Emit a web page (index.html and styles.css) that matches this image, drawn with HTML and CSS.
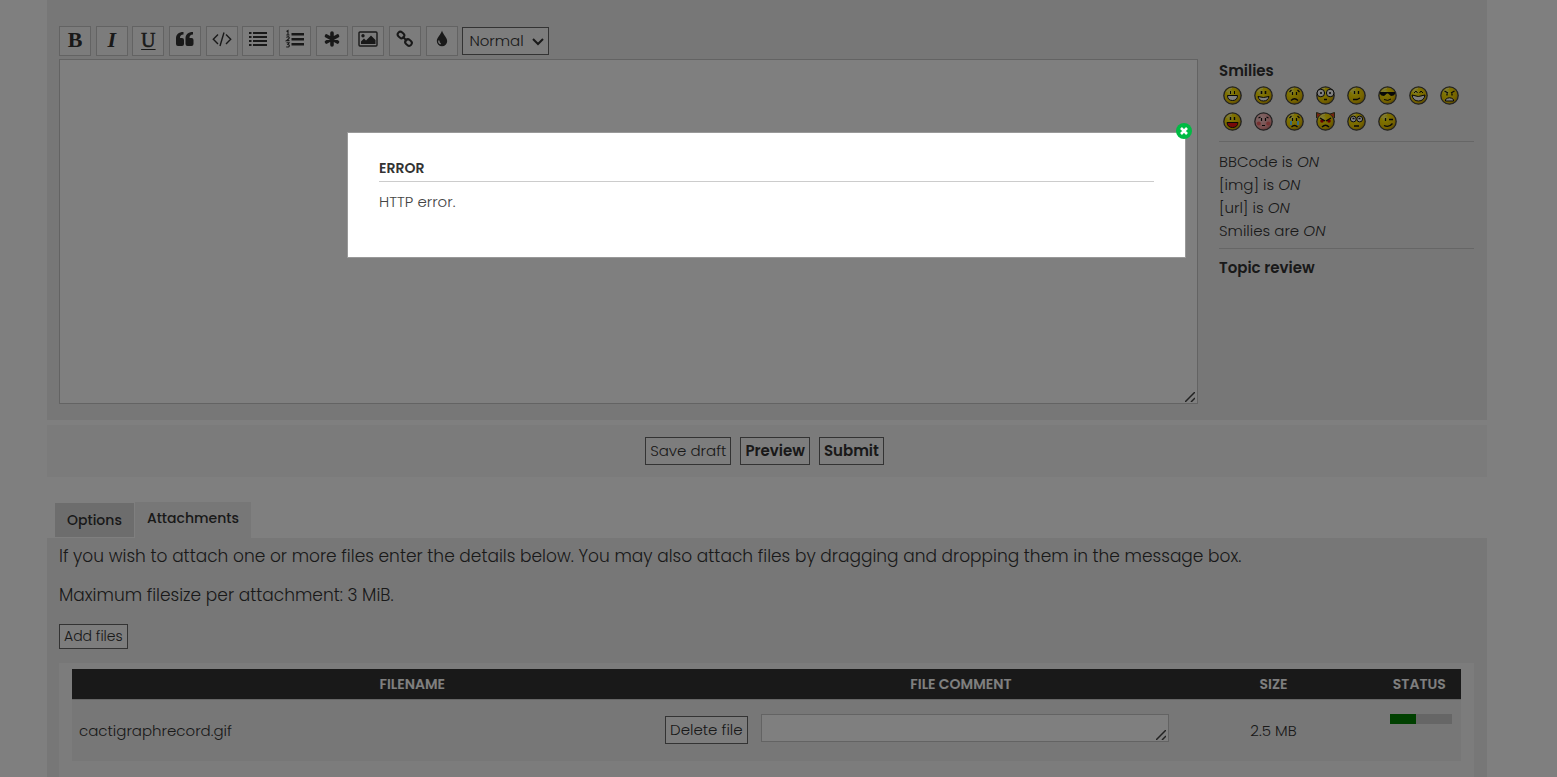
FILE: index.html
```html
<!DOCTYPE html>
<html lang="en">
<head>
<meta charset="utf-8">
<title>Post a new topic</title>
<link rel="stylesheet" href="styles.css">
</head>
<body>
<svg class="defs" aria-hidden="true">
  <defs>
    <radialGradient id="yellow" cx="0.35" cy="0.3" r="0.8"><stop offset="0" stop-color="#ffff7a"/><stop offset="0.25" stop-color="#ffe600"/><stop offset="0.7" stop-color="#eac400"/><stop offset="1" stop-color="#a88400"/></radialGradient>
    <radialGradient id="pink" cx="0.35" cy="0.3" r="0.8"><stop offset="0" stop-color="#ffd0d0"/><stop offset="0.7" stop-color="#f09c9c"/><stop offset="1" stop-color="#c06868"/></radialGradient>
    <symbol id="face" viewBox="0 0 19 19"><circle cx="9.500" cy="9.500" r="8.700" fill="url(#yellow)" stroke="#444" stroke-width="1.300"/><path d="M3.500 6Q5.500 2.500 9 2.200" stroke="#fff" stroke-opacity=".55" fill="none"/></symbol>
  </defs>
</svg>
<main class="page">
  <section class="panel post">
    <div class="editor">
      <div class="toolbar">
        <button class="tool serif" type="button" aria-label="Bold"><b>B</b></button>
        <button class="tool serif" type="button" aria-label="Italic"><i>I</i></button>
        <button class="tool serif" type="button" aria-label="Underline"><u>U</u></button>
        <button class="tool" type="button" aria-label="Quote"><svg viewBox="0 0 20 20"><path d="M8.500 3v2.400C6 5.400 5 6.800 5 9h2a2 2 0 0 1 2 2v4a2 2 0 0 1-2 2H3a2 2 0 0 1-2-2V9.500C1 5.500 3.500 3 8.500 3zM18 3v2.400C15.500 5.400 14.500 6.800 14.500 9h2a2 2 0 0 1 2 2v4a2 2 0 0 1-2 2h-4a2 2 0 0 1-2-2V9.500C10.500 5.500 13 3 18 3z"/></svg></button>
        <button class="tool" type="button" aria-label="Code"><svg viewBox="0 0 20 20"><path d="M6 5.500 1.300 10.200 6 15M14 5.500l4.700 4.700L14 15M12 3.500 8 17" fill="none" stroke="currentColor" stroke-width="1.400"/></svg></button>
        <button class="tool" type="button" aria-label="List"><svg viewBox="0 0 20 20"><path d="M1 3h2.500v2H1zm4 0h14v2H5zM1 7h2.500v2H1zm4 0h14v2H5zM1 11h2.500v2H1zm4 0h14v2H5zM1 15h2.500v2H1zm4 0h14v2H5z"/></svg></button>
        <button class="tool" type="button" aria-label="Ordered list"><svg viewBox="0 0 20 20"><path d="M6.500 4H19v2.400H6.500zm0 5H19v2.400H6.500zm0 5H19v2.400H6.500z"/><path d="M1.500 2.500 3 1.500V6M1.300 6h3.200M1.500 8.500q1.500-1.500 2.500-.3T1.500 11.600h3M1.500 13.800h2.600l-1.200 1.600q1.600 0 1.400 1.500t-3 1" fill="none" stroke="currentColor" stroke-width="1.100"/></svg></button>
        <button class="tool" type="button" aria-label="List item"><svg viewBox="0 0 20 20"><path d="M10 4v12M4.500 7l11 6M4.500 13l11-6" stroke="currentColor" stroke-width="3.600" stroke-linecap="round"/></svg></button>
        <button class="tool" type="button" aria-label="Image"><svg viewBox="0 0 20 20"><rect x="1" y="3" width="18" height="14" rx="1" fill="none" stroke="currentColor" stroke-width="1.400"/><circle cx="5" cy="6.800" r="1.700"/><path d="M3 15v-2.500l3-3 2 2 5-5 4.500 4.500v4z"/></svg></button>
        <button class="tool" type="button" aria-label="Link"><svg viewBox="0 0 20 20"><g fill="none" stroke="currentColor" stroke-width="2"><rect x="-3.500" y="-2.700" width="7" height="5.400" rx="2.700" transform="translate(6 6) rotate(42)"/><rect x="-3.500" y="-2.700" width="7" height="5.400" rx="2.700" transform="translate(13.500 13.500) rotate(42)"/><path d="m7.500 7.500 4.500 4.500"/></g></svg></button>
        <button class="tool" type="button" aria-label="Font colour"><svg viewBox="0 0 20 20"><path d="M10 1.500C9 5.500 4.800 8.500 4.800 12a5.200 5.200 0 0 0 10.400 0C15.200 8.500 11 5.500 10 1.500z"/><path d="M7 11.500q-.8 2.500 1.700 3.300" fill="none" stroke="#f5f5f5" stroke-width="1.300"/></svg></button>
        <span class="picker"><select class="size" aria-label="Font size"><option>Normal</option></select><svg viewBox="0 0 12 8"><path d="m1 1 5 5 5-5" fill="none" stroke="currentColor" stroke-width="2"/></svg></span>
      </div>
      <span class="grow">
        <textarea class="message" aria-label="Message"></textarea>
        <svg class="grip" viewBox="0 0 10 10"><path d="M0 10 10 0M6 10l4-4"/></svg>
      </span>
    </div>
    <aside class="side">
      <h2 class="label">Smilies</h2>
      <div class="smilies">
        <svg><use href="#face"/><path d="M7.500 5v3M11.500 5v3" stroke="#111"/><path d="M4.500 9.500h10q0 5-5 5t-5-5z" fill="#fff" stroke="#111"/></svg>
        <svg><use href="#face"/><path d="M7.500 5v3M11.500 5v3" stroke="#111" stroke-width="1.600"/><path d="M4 10.500q5.500 2 11 0-1 4.500-5.500 4.500T4 10.500z" fill="#fff" stroke="#111"/></svg>
        <svg><use href="#face"/><path d="M7.500 6v3M11.500 6v3M4.500 6l2-2M14.500 6l-2-2M6 14.500q3.500-3.500 7 0" fill="none" stroke="#111" stroke-width="1.200"/></svg>
        <svg><use href="#face"/><circle cx="4.800" cy="7" r="3.800" fill="#fff" stroke="#111"/><circle cx="14.200" cy="7" r="3.800" fill="#fff" stroke="#111"/><path d="M4 7h2M13 7h2M8 13.500h3" stroke="#111" stroke-width="1.500"/></svg>
        <svg><use href="#face"/><path d="M7.500 5v3M11.500 5v3M6 13.500h4l3-1.500" fill="none" stroke="#111" stroke-width="1.300"/></svg>
        <svg><use href="#face"/><path d="M2 6h15v2q-1 2-4 2l-3-2.500H9L6 10Q3 10 2 8z" fill="#111"/><path d="M6 13.500q4 2 7-.5" fill="none" stroke="#111"/></svg>
        <svg><use href="#face"/><path d="m5 7 2-2 1.500 2M10.500 7 12 5l2 2" fill="none" stroke="#111"/><path d="M3 9q6 3 13 0-1 6-6.500 6T3 9z" fill="#fff" stroke="#111"/></svg>
        <svg><use href="#face"/><path d="m4.500 5 3.500 2M14.500 5 11 7M7 7.500v2M12 7.500v2" stroke="#111" stroke-width="1.300"/><path d="M5.500 15v-1.500q4-3.500 8 0V15z" fill="#fff" stroke="#111"/></svg>
        <svg><use href="#face"/><path d="M7.500 5v3M11.500 5v3" stroke="#111" stroke-width="1.400"/><path d="M4 10.500h11q-.5 5-5.500 5t-5.500-5z" fill="#e11" stroke="#111"/></svg>
        <svg><circle cx="9.500" cy="9.500" r="8.700" fill="url(#pink)" stroke="#444" stroke-width="1.300"/><circle cx="4.800" cy="11.500" r="2" fill="#e66"/><circle cx="14.200" cy="11.500" r="2" fill="#e66"/><path d="M7.500 6v3M11.500 6v3M4.500 6l2-1M14.500 6l-2-1M8 13.500h3" stroke="#111" stroke-width="1.200"/></svg>
        <svg><use href="#face"/><path d="M6 9v4M13 9v4" stroke="#6cd5ff" stroke-width="2"/><path d="M7.500 6v3M11.500 6v3M4.500 6l2-2M14.500 6l-2-2M6.500 15q3-3 6 0" fill="none" stroke="#111" stroke-width="1.200"/></svg>
        <svg><use href="#face"/><path d="M.5 6V.5L5 2M18.500 6V.5L14 2" fill="#e64a1d" stroke="#442"/><circle cx="6" cy="9" r="1.800" fill="#c00"/><circle cx="13" cy="9" r="1.800" fill="#c00"/><path d="m4 6 5 3M15 6l-5 3M6 15q3.500-3.500 7 0" fill="none" stroke="#111" stroke-width="1.400"/></svg>
        <svg><use href="#face"/><circle cx="6.300" cy="7" r="2.900" fill="#fff" stroke="#111"/><circle cx="12.700" cy="7" r="2.900" fill="#fff" stroke="#111"/><path d="M5.500 6.500h2M11.500 6.500h2M7 14h5" stroke="#111" stroke-width="1.600"/></svg>
        <svg><use href="#face"/><path d="M7.500 6v3M11 7.500h4M6 13.500q5 2.500 8.500-2" fill="none" stroke="#111" stroke-width="1.300"/></svg>
      </div>
      <div class="status">
        BBCode is <em>ON</em><br>
        [img] is <em>ON</em><br>
        [url] is <em>ON</em><br>
        Smilies are <em>ON</em>
      </div>
      <h2 class="label">Topic review</h2>
    </aside>
  </section>

  <section class="submit">
    <button class="btn" type="button">Save draft</button>
    <button class="btn strong" type="button">Preview</button>
    <button class="btn strong" type="submit">Submit</button>
  </section>

  <nav class="tabs">
    <a class="tab" href="#options">Options</a>
    <a class="tab active" href="#attachments">Attachments</a>
  </nav>

  <section class="panel attach" id="attachments">
    <p class="lead">If you wish to attach one or more files enter the details below. You may also attach files by dragging and dropping them in the message box.</p>
    <p class="lead">Maximum filesize per attachment: 3 MiB.</p>
    <button class="btn small" type="button">Add files</button>
    <div class="files">
      <table class="list">
        <thead><tr><th class="c-name">Filename</th><th class="c-note">File comment</th><th class="c-size">Size</th><th class="c-stat">Status</th></tr></thead>
        <tbody><tr>
          <td><div class="file"><a class="name" href="#file">cactigraphrecord.gif</a><button class="btn delete" type="button">Delete file</button></div></td>
          <td class="top"><span class="grow"><textarea class="note" aria-label="File comment"></textarea><svg class="grip" viewBox="0 0 10 10"><path d="M0 10 10 0M6 10l4-4"/></svg></span></td>
          <td class="num">2.5 MB</td>
          <td class="top stat"><div class="track"><div class="bar" style="width:42%"></div></div></td>
        </tr></tbody>
      </table>
    </div>
  </section>
</main>

<div class="shade">
  <div class="alert" role="alertdialog" aria-labelledby="alert-title">
    <button class="close" type="button" aria-label="Close"><svg viewBox="0 0 16 16"><circle cx="8" cy="8" r="8" fill="#0b4"/><path d="m5 5 6 6M11 5l-6 6" stroke="#fff" stroke-width="2.600"/></svg></button>
    <h3 class="alert-title" id="alert-title">Error</h3>
    <p class="alert-text">HTTP error.</p>
  </div>
</div>
</body>
</html>
```
FILE: styles.css
```css
* { box-sizing: border-box; }
body {
  margin: 0;
  background: #fff;
  color: #333;
  font-family: Poppins, Inter, "Open Sans", sans-serif;
  font-size: 15px;
  font-weight: 300;
  line-height: 23px;
}
button, select, textarea { font: inherit; color: inherit; margin: 0; }
h2, h3, p { margin: 0; }
.defs { position: absolute; width: 0; height: 0; }

.page {
  display: flex;
  flex-direction: column;
  height: 100vh;
  overflow: hidden;
  padding: 0 70px 0 47px;
}
.panel { background: #efefef; padding: 0 13px 0 12px; }
.post { display: flex; gap: 21px; padding-top: 26px; padding-bottom: 16px; }
.editor { flex: 1; }
.toolbar { font-size: 17px; height: 33px; white-space: nowrap; }
.tool {
  display: inline-block;
  width: 32px;
  height: 30px;
  padding: 0;
  border: 1px solid #c7c7c7;
  background: #f9f9f9;
  vertical-align: top;
}
.tool svg { display: block; width: 20px; height: 20px; margin: -4px auto 0; fill: currentColor; }
.serif { padding-bottom: 3px; font-family: "Liberation Serif", serif; font-size: 22px; font-weight: 400; line-height: 24px; }
.serif i { font-weight: 700; }
.serif u { font-size: 20px; font-weight: 400; -webkit-text-stroke: 0.5px; text-decoration-thickness: 1px; text-underline-offset: 2px; }
.picker { display: inline-block; position: relative; margin-top: 1px; vertical-align: top; }
.picker svg { position: absolute; right: 5px; top: 11px; width: 12px; height: 8px; }
.size {
  appearance: none;
  display: block;
  width: 87px;
  height: 28px;
  padding: 0 6px 2px;
  border: 1px solid #666;
  border-radius: 0;
  background: #fafafa;
  font-size: 15px;
}
.grow { display: block; position: relative; }
.grip { position: absolute; right: 3px; bottom: 2px; width: 10px; height: 10px; stroke: #444; stroke-width: 1.5; fill: none; }
.message, .note { display: block; width: 100%; border: 1px solid #c7c7c7; background: #fff; resize: none; }
.message { height: 345px; }
.note { height: 28px; }

.side { width: 255px; padding-top: 33px; }
.label { font-size: 15px; font-weight: 600; line-height: 23px; }
.smilies { display: flex; flex-wrap: wrap; gap: 7px 12px; padding: 4px 0 10px 4px; }
.smilies svg { width: 19px; height: 19px; }
.status { border: solid #ccc; border-width: 1px 0; padding: 8px 0 6px; margin-bottom: 7px; }

.submit {
  display: flex;
  justify-content: center;
  gap: 9px;
  margin-top: 5px;
  padding: 12px 5px 12px 0;
  background: #f7f7f7;
}
.btn {
  height: 28px;
  padding: 0 4px;
  border: 1px solid #666;
  background: #fafafa;
  line-height: 24px;
}
.strong { font-weight: 600; }
.small { height: 25px; padding-bottom: 2px; font-size: 14px; line-height: 20px; }

.tabs { display: flex; align-items: flex-end; gap: 1px; margin-top: 25px; padding-left: 8px; }
.tab {
  padding: 0 12px;
  margin-bottom: 1px;
  background: #dadada;
  color: #333;
  font-size: 14px;
  font-weight: 500;
  line-height: 34px;
  text-decoration: none;
}
.tab.active { margin-bottom: 0; padding-bottom: 4px; background: #efefef; line-height: 32px; }

.attach { flex: 1; }
.lead { font-size: 17px; line-height: 24px; padding-top: 6px; margin-bottom: 9px; }
.attach .small { margin-top: 8px; }
.files { margin-top: 14px; padding: 6px 13px 100px; background: #f9f9f9; }
.list { width: 100%; table-layout: fixed; border-collapse: collapse; }
.list th {
  height: 30px;
  padding: 0;
  background: #333;
  color: #fff;
  font-size: 14px;
  font-weight: 600;
  line-height: 28px;
  text-transform: uppercase;
}
.list td { height: 62px; padding: 0; background: #efefef; border-top: 1px solid #ccc; }
.c-name { width: 49%; }
.c-note { width: 30%; }
.c-size { width: 15%; }
.c-stat { width: 6%; }
.list .top { vertical-align: top; padding: 14px 0 0 8px; }
.file { display: flex; align-items: center; justify-content: space-between; padding: 0 5px 0 7px; }
.name { color: #333; text-decoration: none; }
.num { text-align: center; }
.list .stat { padding-left: 12px; padding-right: 9px; }
.track { height: 10px; background: #ccc; }
.bar { height: 10px; background: #008000; }

.shade {
  position: fixed;
  inset: 0;
  padding: 132px 71px 0 47px;
  background: rgba(0, 0, 0, 0.5);
}
.alert {
  position: relative;
  width: 58.3%;
  min-height: 126px;
  margin: 0 auto;
  padding: 23px 31px;
  border: 1px solid #999;
  background: #fff;
}
.alert-title {
  padding-bottom: 1px;
  border-bottom: 1px solid #ccc;
  font-size: 14px;
  font-weight: 600;
  line-height: 24px;
  text-transform: uppercase;
}
.alert-text { margin-top: 8px; font-size: 15px; line-height: 24px; color: #444; }
.close {
  position: absolute;
  top: -10px;
  right: -7px;
  width: 16px;
  height: 16px;
  padding: 0;
  border: 0;
  background: none;
}
.close svg { display: block; }
```
